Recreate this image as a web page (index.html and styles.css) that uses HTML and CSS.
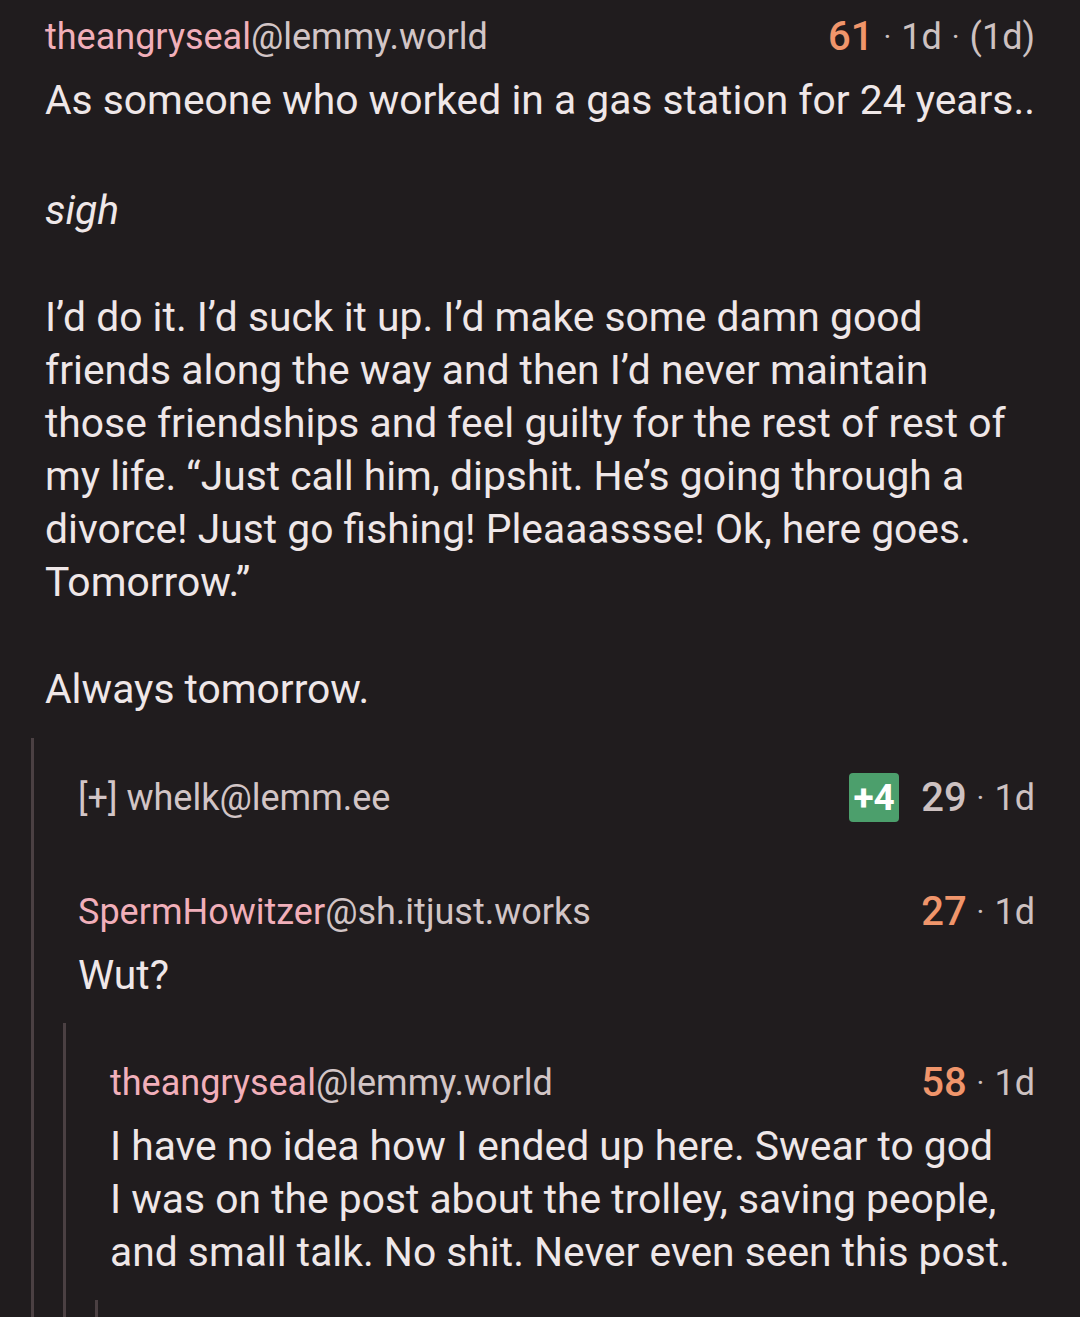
FILE: index.html
```html
<!DOCTYPE html>
<html>
<head>
<meta charset="utf-8">
<link rel="stylesheet" href="styles.css">
</head>
<body>
<div class="thread">
  <div class="comment top">
    <div class="header">
      <div class="author"><span class="name">theangryseal</span><span class="inst">@lemmy.world</span></div>
      <div class="meta"><span class="score up">61</span><span class="dot">·</span><span>1d</span><span class="dot">·</span><span>(1d)</span></div>
    </div>
    <div class="body">
      <p>As someone who worked in a gas station for 24 years..</p>
      <p class="shift"><em>sigh</em></p>
      <p>I’d do it. I’d suck it up. I’d make some damn good friends along the way and then I’d never maintain those friendships and feel guilty for the rest of rest of my life. “Just call him, dipshit. He’s going through a divorce! Just go fishing! Pleaaassse! Ok, here goes. Tomorrow.”</p>
      <p>Always tomorrow.</p>
    </div>
    <div class="children">
      <div class="comment collapsed">
        <div class="header">
          <div class="author"><span class="toggle">[+]</span> <span class="inst">whelk@lemm.ee</span></div>
          <div class="meta"><span class="badge">+4</span><span class="score">29</span><span class="dot">·</span><span>1d</span></div>
        </div>
      </div>
      <div class="comment">
        <div class="header">
          <div class="author"><span class="name">SpermHowitzer</span><span class="inst">@sh.itjust.works</span></div>
          <div class="meta"><span class="score up">27</span><span class="dot">·</span><span>1d</span></div>
        </div>
        <div class="body">
          <p>Wut?</p>
        </div>
        <div class="children">
          <div class="comment">
            <div class="header">
              <div class="author"><span class="name">theangryseal</span><span class="inst">@lemmy.world</span></div>
              <div class="meta"><span class="score up">58</span><span class="dot">·</span><span>1d</span></div>
            </div>
            <div class="body narrow">
              <p>I have no idea how I ended up here. Swear to god I was on the post about the trolley, saving people, and small talk. No shit. Never even seen this post.</p>
            </div>
            <div class="children">
              <div class="comment">
                <div class="header">
                  <div class="author"><span class="name">SpermHowitzer</span><span class="inst">@sh.itjust.works</span></div>
                  <div class="meta"><span class="score up">12</span><span class="dot">·</span><span>1d</span></div>
                </div>
              </div>
            </div>
          </div>
        </div>
      </div>
    </div>
  </div>
</div>
</body>
</html>
```
FILE: styles.css
```css
html, body {
  margin: 0;
  padding: 0;
  background: #201c1e;
}
body {
  width: 1080px;
  height: 1317px;
  overflow: hidden;
  font-family: Roboto, "Noto Sans", sans-serif;
  color: #efe7e8;
}
.thread {
  padding: 0 45px 0 45px;
}
.comment {
  padding-top: 33px;
}
.comment.top {
  padding-top: 10px;
}
.comment + .comment {
  margin-top: 28px;
}
.header {
  display: flex;
  justify-content: space-between;
  align-items: center;
  height: 53px;
  font-size: 36px;
}
.author {
  white-space: nowrap;
}
.name {
  color: #f1afba;
}
.inst, .toggle {
  color: #d2c5c6;
}
.meta {
  display: flex;
  align-items: center;
  color: #cdc1c1;
  white-space: nowrap;
}
.score {
  font-size: 40px;
  font-weight: 500;
  color: #cdc1c1;
}
.score.up {
  color: #f0956b;
}
.dot {
  margin: 0 10px;
  font-size: 30px;
}
.badge {
  display: inline-flex;
  align-items: center;
  justify-content: center;
  width: 50px;
  height: 49px;
  border-radius: 4px;
  background: #4c9f6c;
  color: #ffffff;
  font-weight: 700;
  font-size: 37px;
  margin-right: 22px;
}
.body {
  margin-top: 11px;
  margin-right: -3px;
  font-size: 40.8px;
  line-height: 53px;
}
.body.narrow {
  padding-right: 26px;
}
.body p {
  margin: 0 0 54px 0;
}
.body p.shift {
  padding-top: 3px;
}
.body p:last-child {
  margin-bottom: 0;
}
.body em {
  font-style: italic;
}
.children {
  margin-top: 22px;
  margin-left: -14px;
  border-left: 3px solid #4b4043;
  padding-left: 44px;
  margin-right: 0;
}
.children .children {
  margin-left: -15px;
}
.children .comment .children {
  margin-top: 21px;
}
```
